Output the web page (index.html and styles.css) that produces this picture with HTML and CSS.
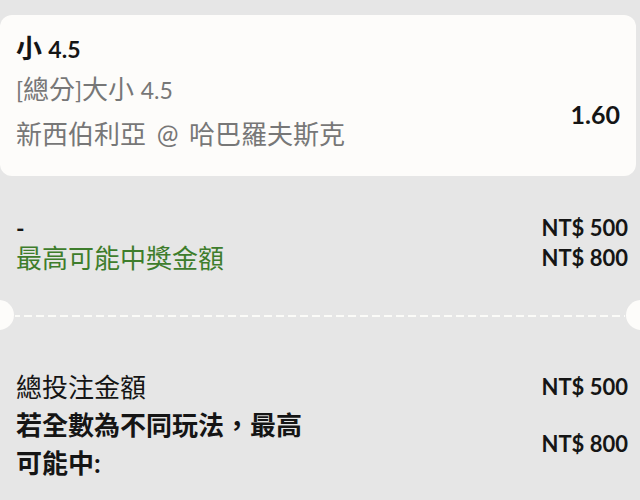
FILE: index.html
```html
<!DOCTYPE html>
<html lang="zh-Hant">
<head>
    <meta charset="UTF-8">
    <meta name="viewport" content="width=device-width, initial-scale=1.0">
    <title>投注單</title>
    <link rel="stylesheet" href="styles.css">
</head>
<body>
    <div class="slip">
        <div class="card">
            <div class="info">
                <div class="pick">小 <span class="num">4.5</span></div>
                <div class="market"><span class="num">[</span>總分<span class="num">]</span>大小 <span class="num">4.5</span></div>
                <div class="match">新西伯利亞 @ 哈巴羅夫斯克</div>
            </div>
            <div class="odds num">1.60</div>
        </div>

        <div class="summary">
            <div class="row">
                <span class="dash num">-</span>
                <span class="amount num">NT$ 500</span>
            </div>
            <div class="row">
                <span class="win">最高可能中獎金額</span>
                <span class="amount num">NT$ 800</span>
            </div>
        </div>

        <div class="divider"></div>

        <div class="totals">
            <div class="row">
                <span>總投注金額</span>
                <span class="amount num">NT$ 500</span>
            </div>
            <div class="row center">
                <span class="label-bold">若全數為不同玩法，最高可能中:</span>
                <span class="amount num">NT$ 800</span>
            </div>
        </div>
    </div>
</body>
</html>
```

FILE: styles.css
```css
body {
    margin: 0;
    background-color: #e6e6e6;
    font-family: "Lato", "Noto Sans CJK TC", sans-serif;
    font-size: 26px;
    color: #151515;
}
.num {
    font-size: 23px;
    line-height: 1;
}
.slip {
    padding-top: 15px;
}
.card {
    display: flex;
    justify-content: space-between;
    margin-right: 4px;
    padding: 13px 16px 21px 16px;
    background-color: #fdfcfa;
    border-radius: 12px;
    line-height: 41px;
}
.pick {
    font-weight: bold;
}
.market,
.match {
    color: #777;
}
.match {
    margin-top: 4px;
    word-spacing: 4px;
}
.odds {
    align-self: flex-end;
    margin-bottom: 20px;
    line-height: 41px;
    font-size: 25px;
    font-weight: bold;
}
.summary {
    padding: 37px 12px 0 16px;
    line-height: 30px;
}
.summary .amount,
.summary .dash {
    line-height: 30px;
}
.row {
    display: flex;
    justify-content: space-between;
}
.dash {
    font-weight: bold;
}
.win {
    color: #3e7d2c;
}
.amount {
    font-size: 22px;
    font-weight: bold;
}
.divider {
    position: relative;
    margin: 42px 0 0 0;
    height: 2px;
    background-image: linear-gradient(to right, #fbfbf8 8px, transparent 8px);
    background-size: 12px 2px;
    background-clip: content-box;
    padding: 0 15px;
}
.divider::before,
.divider::after {
    content: "";
    position: absolute;
    top: -15px;
    width: 30px;
    height: 30px;
    border-radius: 50%;
    background-color: #fdfcfa;
}
.divider::before {
    left: -16px;
}
.divider::after {
    right: -16px;
}
.totals {
    padding: 51px 12px 0 16px;
    line-height: 38px;
}
.totals .amount {
    line-height: 38px;
}
.center {
    align-items: center;
}
.label-bold {
    max-width: 300px;
    font-weight: bold;
}
```
